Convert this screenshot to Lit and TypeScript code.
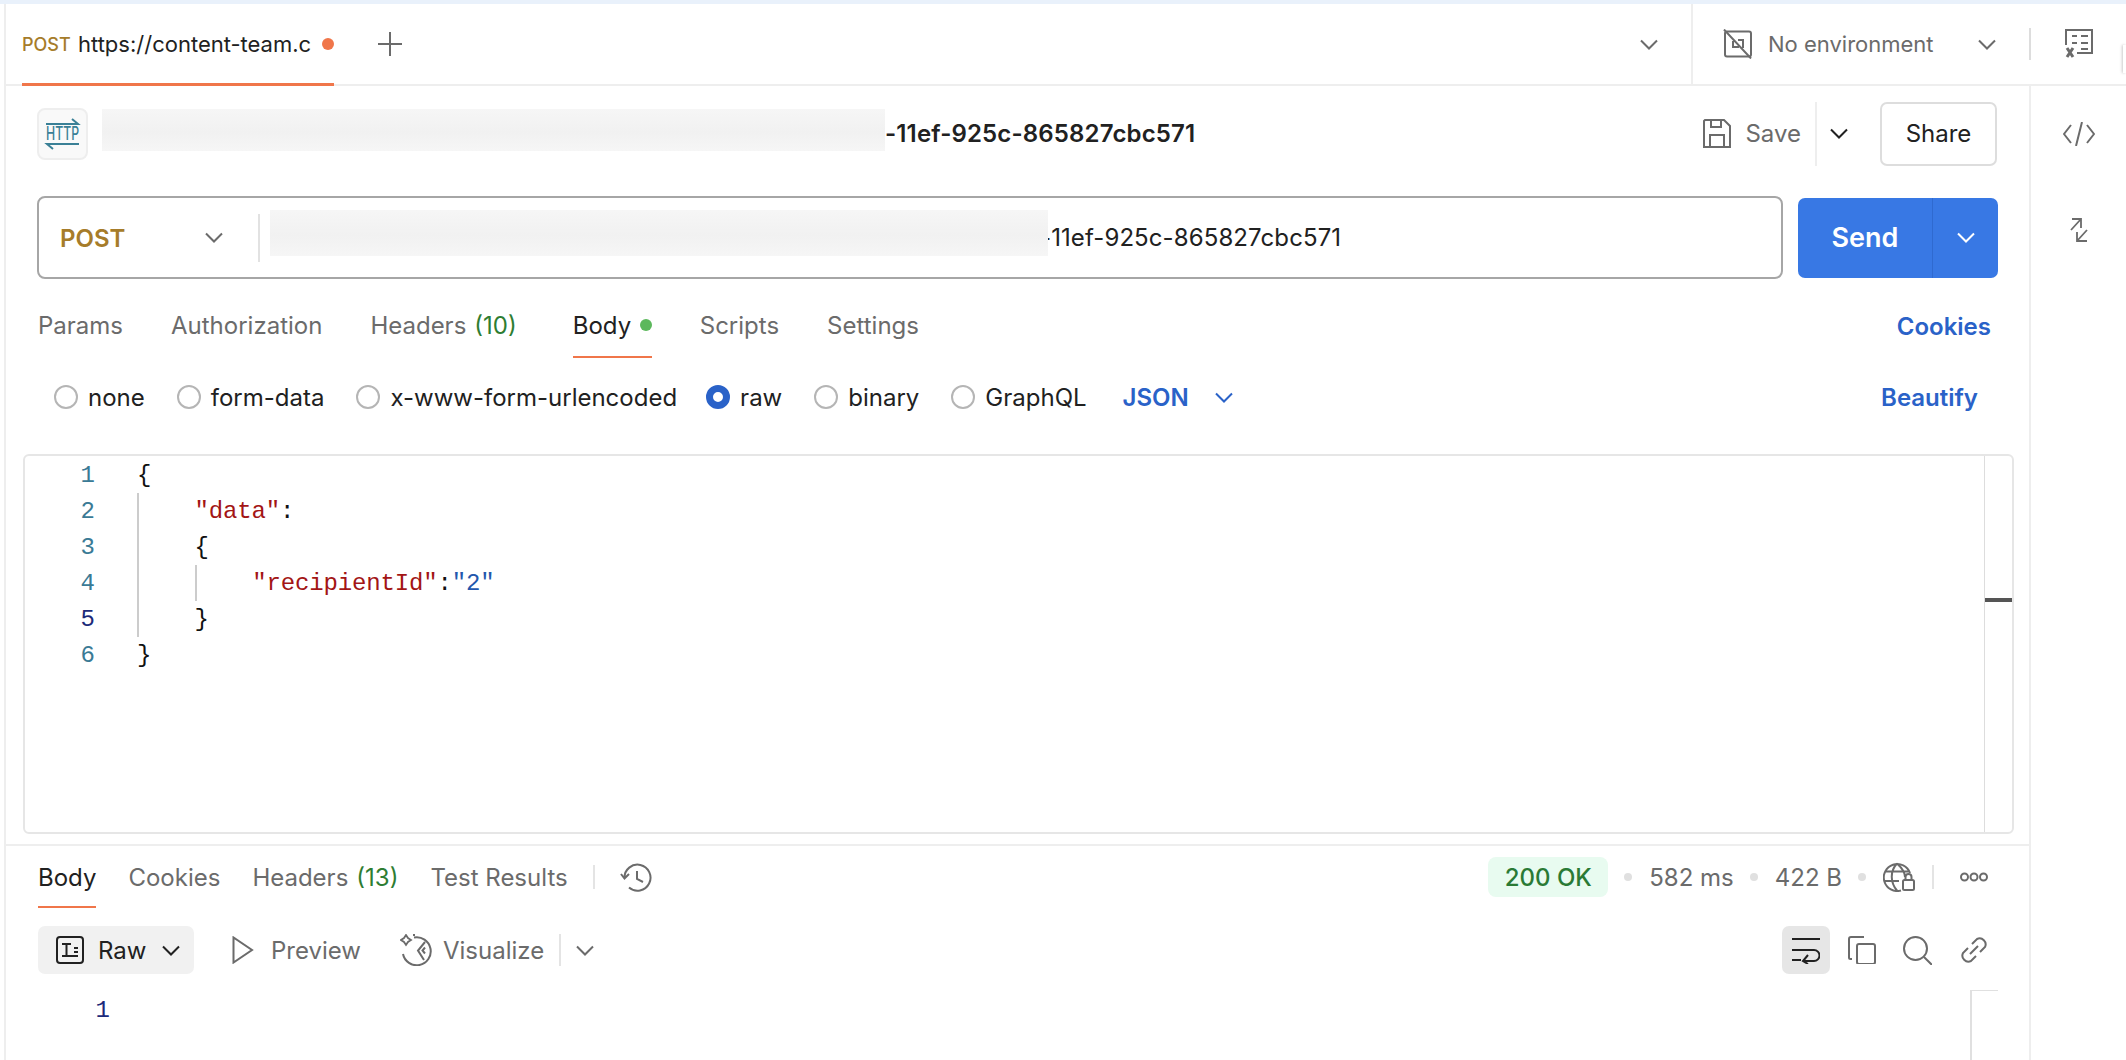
import { LitElement, html, css, svg } from "lit";
import { customElement } from "lit/decorators.js";

const ico = (w: number, h: number, body: unknown, cls = "") => html`<svg class="ico ${cls}" width=${w} height=${h} viewBox="0 0 ${w} ${h}" fill="none" stroke="currentColor" stroke-width="2" aria-hidden="true">${body}</svg>`;
const chev = (cls = "") => ico(18, 11, svg`<path d="M1 1.5 9 9.5 17 1.5"/>`, cls);

const codeLines: { indent: number; parts: [string, string][]; active?: boolean }[] = [
  { indent: 0, parts: [["p", "{"]] },
  { indent: 1, parts: [["k", '"data"'], ["p", ":"]] },
  { indent: 1, parts: [["p", "{"]] },
  { indent: 2, parts: [["k", '"recipientId"'], ["p", ":"], ["s", '"2"']] },
  { indent: 1, parts: [["p", "}"]], active: true },
  { indent: 0, parts: [["p", "}"]] },
];

@customElement("app-root")
export class AppRoot extends LitElement {
  static styles = css`
    :host { display: block; width: 2126px; height: 1060px; overflow: hidden; background: #fff; font-family: Inter, "Liberation Sans", sans-serif; font-size: 24px; color: #6b6b6b; position: relative; }
    * { box-sizing: border-box; }
    .ico { display: block; flex: none; }
    .strip { height: 4px; background: #e9f1fb; }
    .shell { margin-left: 4px; border-left: 2px solid #eee; height: 1056px; display: flex; flex-direction: column; }
    .tabbar { height: 82px; flex: none; display: flex; align-items: stretch; border-bottom: 2px solid #eee; position: relative; }
    .tab { margin-left: 16px; width: 312px; display: flex; align-items: center; border-bottom: 3px solid #f0764a; height: 82px; padding-top: 1px; }
    .tab .m { font-size: 18px; font-weight: 500; color: #a67c2a; width: 56px; }
    .tab .u { color: #212121; width: 244px; white-space: nowrap; overflow: hidden; font-size: 22px; }
    .tab .dot { width: 12px; height: 12px; border-radius: 50%; background: #f0764a; flex: none; }
    .plus { margin-left: 44px; align-self: center; color: #6b6b6b; }
    .grow { flex: 1; }
    .tabchev { align-self: center; margin-right: 33px; color: #6b6b6b; }
    .env { width: 435px; flex: none; border-left: 2px solid #eee; display: flex; align-items: center; padding-left: 30px; color: #6b6b6b; font-size: 22px; }
    .env .t { margin-left: 15px; width: 210px; white-space: nowrap; }
    .vsep { width: 2px; height: 32px; background: #ddd; margin-left: 33px; flex: none; }
    .env .vars { margin-left: 34px; }
    .peek { position: absolute; right: 0; top: 41px; width: 3px; height: 28px; background: #fff; box-shadow: -1px 0 3px rgba(0,0,0,.22); }
    .main { flex: 1; display: flex; min-height: 0; }
    .col { width: 2023px; flex: none; display: flex; flex-direction: column; }
    .side { flex: 1; border-left: 2px solid #eee; display: flex; flex-direction: column; align-items: center; color: #6b6b6b; }
    .side .a { margin-top: 36px; }
    .side .b { margin-top: 72px; }
    .title { height: 95px; flex: none; display: flex; align-items: center; padding: 0 32px 0 31px; }
    .hicon { width: 51px; height: 52px; border: 2px solid #eee; border-radius: 8px; background: #f9f9f9; flex: none; color: #3a8096; }
    .hicon svg { display: block; overflow: visible; }
    .hicon text { font: 500 18px Inter, sans-serif; fill: #3a8096; stroke: none; }
    .blur { background: linear-gradient(180deg, #f6f6f6, #f1f1f1 55%, #f6f6f6); flex: none; }
    .blurA { width: 783px; height: 42px; margin: 0 0 8px 14px; }
    .ttail { font-weight: 600; color: #212121; white-space: nowrap; letter-spacing: .15px; }
    .save { display: flex; align-items: center; color: #6b6b6b; }
    .save span { margin-left: 14px; }
    .savesep { width: 2px; height: 64px; background: #eee; margin-left: 14px; }
    .savechev { margin: 0 32px 0 13px; color: #212121; }
    .share { width: 117px; height: 64px; border: 2px solid #ddd; border-radius: 7px; display: flex; align-items: center; justify-content: center; color: #212121; }
    .url { margin-top: 15px; height: 83px; flex: none; display: flex; padding: 0 31px; gap: 15px; align-items: center; }
    .ubox { width: 1746px; height: 83px; border: 2px solid #a6a6a6; border-radius: 8px; display: flex; align-items: center; padding-left: 21px; }
    .ubox .m { width: 145px; font-size: 24px; font-weight: 600; color: #a67c2a; padding-top: 2px; }
    .ubox .c { color: #6b6b6b; }
    .usep { width: 2px; height: 48px; background: #e2e2e2; margin-left: 35px; }
    .blurB { width: 778px; height: 46px; margin: 0 0 10px 10px; position: relative; z-index: 1; }
    .utail { color: #212121; white-space: nowrap; margin-left: -8px; letter-spacing: .1px; }
    .send { width: 200px; height: 80px; background: #3878e4; border-radius: 7px; display: flex; color: #fff; }
    .send .l { width: 135px; display: flex; align-items: center; justify-content: center; font-size: 27px; font-weight: 600; border-right: 1px solid #2f6ad0; }
    .send .r { flex: 1; display: flex; align-items: center; justify-content: center; }
    .rtabs { margin-top: 17px; height: 62px; flex: none; display: flex; padding: 0 31px 0 32px; gap: 48px; }
    .rtab { display: flex; align-items: center; height: 62px; border-bottom: 2px solid transparent; white-space: nowrap; }
    .rtabs .rtab, .rtabs .link { padding-bottom: 2px; }
    .rtab.on { color: #212121; border-bottom-color: #f0764a; }
    .rtab.bodytab { margin-left: 8px; width: 79px; gap: 9px; }
    .rtab.bodytab i { width: 12px; height: 12px; border-radius: 50%; background: #5cb85c; display: block; flex: none; }
    .count { color: #2e7d32; margin-left: 8px; }
    .link { color: #2a62c8; font-weight: 600; margin-left: auto; display: flex; align-items: center; padding-right: 7px; }
    .radios { height: 78px; flex: none; display: flex; align-items: center; padding: 0 44px 0 48px; color: #212121; }
    .radio { width: 24px; height: 24px; border-radius: 50%; border: 2px solid #b5b5b5; margin-right: 10px; flex: none; }
    .radio.on { border: 7px solid #2a62c8; }
    .rlabel { margin-right: 32px; white-space: nowrap; }
    .rlabel.long { margin-right: 29px; }
    .json { color: #2a62c8; font-weight: 600; margin-left: 4px; }
    .jsonchev { margin-left: 26px; color: #2a62c8; }
    .editor { margin: 18px 0 0 17px; width: 1991px; height: 380px; flex: none; border: 2px solid #e6e6e6; border-radius: 6px; display: flex; font: 24px/36px "Liberation Mono", monospace; position: relative; }
    .gutter { width: 70px; padding-top: 2px; text-align: right; flex: none; color: #3a7a95; }
    .gutter .act { color: #1c2a7a; }
    .code { width: 1890px; flex: none; padding: 2px 0 0 42px; border-right: 1px solid #ddd; color: #000; letter-spacing: -.15px; }
    .cl { height: 36px; display: flex; white-space: pre; }
    .guide { width: 57.6px; height: 36px; border-left: 2px solid #ccc; flex: none; margin-top: -1px; }
    .k { color: #a31515; } .s { color: #2357ad; } .p { color: #111; }
    .marker { flex: 1; position: relative; }
    .marker i { position: absolute; left: 0; right: 0; top: 142px; height: 4px; background: #555; }
    .rdiv { margin-top: 10px; border-top: 2px solid #eee; flex: none; }
    .restabs { height: 64px; flex: none; display: flex; padding: 0 41px 0 32px; gap: 32px; align-items: flex-start; }
    .restabs .rtab { padding-top: 2px; }
    .rsep { width: 2px; height: 24px; background: #e4e4e4; margin: 19px 0 0 -7px; flex: none; }
    .hist { margin: 17px 0 0 -7px; color: #6b6b6b; }
    .status { margin-left: auto; height: 62px; display: flex; align-items: center; }
    .pill { width: 120px; height: 40px; background: #e8fbf0; color: #2a7a35; border-radius: 8px; display: flex; align-items: center; justify-content: center; font-weight: 500; }
    .sdot { width: 8px; height: 8px; border-radius: 50%; background: #e0e0e0; margin: 0 17px 0 16px; flex: none; }
    .stat { white-space: nowrap; }
    .ssep { width: 2px; height: 24px; background: #e4e4e4; margin: 0 26px 0 17px; }
    .tools { margin-top: 16px; height: 48px; flex: none; display: flex; align-items: center; padding: 0 41px 0 32px; }
    .rawbtn { width: 156px; height: 48px; background: #f1f1f1; border-radius: 7px; display: flex; align-items: center; padding-left: 18px; color: #212121; flex: none; }
    .rawbtn span { margin: 0 16px 0 14px; }
    .pv { margin-left: 38px; } .pvt { margin-left: 17px; }
    .vz { margin-left: 39px; } .vzt { margin-left: 11px; }
    .tsep { width: 2px; height: 32px; background: #e4e4e4; margin: 0 15px 0 15px; }
    .wrapb { width: 48px; height: 48px; background: #e6e6e6; border-radius: 7px; margin-left: auto; display: flex; align-items: center; justify-content: center; color: #212121; }
    .ti { margin-left: 18px; } .ti2 { margin-left: 27px; } .ti3 { margin-left: 28px; }
    .resbody { flex: 1; display: flex; font: 24px/36px "Liberation Mono", monospace; color: #1c2a7a; margin-top: 16px; min-height: 0; }
    .resnum { width: 104px; text-align: right; flex: none; padding-top: 3px; }
    .resmini { margin-left: 1860px; width: 28px; border-left: 2px solid #e0e0e0; border-top: 1px solid #e0e0e0; flex: none; }
  `;

  render() {
    return html`
      <div class="strip"></div>
      <div class="shell">
        <div class="tabbar">
          <div class="tab"><span class="m">POST</span><span class="u">https://content-team.c</span><span class="dot"></span></div>
          ${ico(24, 24, svg`<path d="M12 0v24M0 12h24"/>`, "plus")}
          <div class="grow"></div>
          ${chev("tabchev")}
          <div class="env">
            ${ico(30, 30, svg`<rect x="2" y="2.500" width="26" height="25" rx="2"/><path d="M1 0.500 28 29.500M10 12v6h6M15 11h5v8" stroke-width="2"/>`)}
            <span class="t">No environment</span>
            ${chev()}
            <span class="vsep"></span>
            ${ico(28, 30, svg`<path d="M1 16V1H27V24H12M7 7h5M16 7h7M7 14h5M16 14h7M16 20h7"/><path d="M2 19l6 9M8 19l-6 9" stroke-width="3"/>`, "vars")}
          </div>
          <span class="peek"></span>
        </div>
        <div class="main">
          <div class="col">
            <div class="title">
              <div class="hicon">
                <svg width="47" height="48" viewBox="0 0 47 48" fill="none" stroke="currentColor" stroke-width="2">
                  <path d="M7 14H39L33 9"/>
                  <path d="M40 34H8L14 39"/>
                  <text x="7" y="30" textLength="33" lengthAdjust="spacingAndGlyphs">HTTP</text>
                </svg>
              </div>
              <div class="blur blurA"></div>
              <span class="ttail">-11ef-925c-865827cbc571</span>
              <div class="grow"></div>
              <div class="save">
                ${ico(28, 29, svg`<path d="M2 1H21L27 7V28H1V2ZM8 1V8H18V1M7 28V16H21V28"/>`)}
                <span>Save</span>
              </div>
              <div class="savesep"></div>
              ${chev("savechev")}
              <div class="share">Share</div>
            </div>
            <div class="url">
              <div class="ubox">
                <span class="m">POST</span>
                ${chev("c")}
                <span class="usep"></span>
                <div class="blur blurB"></div>
                <span class="utail">-11ef-925c-865827cbc571</span>
              </div>
              <div class="send"><span class="l">Send</span><span class="r">${chev()}</span></div>
            </div>
            <div class="rtabs">
              <div class="rtab">Params</div>
              <div class="rtab">Authorization</div>
              <div class="rtab">Headers<span class="count">(10)</span></div>
              <div class="rtab on bodytab">Body<i></i></div>
              <div class="rtab">Scripts</div>
              <div class="rtab">Settings</div>
              <div class="link">Cookies</div>
            </div>
            <div class="radios">
              <span class="radio"></span><span class="rlabel">none</span>
              <span class="radio"></span><span class="rlabel">form-data</span>
              <span class="radio"></span><span class="rlabel long">x-www-form-urlencoded</span>
              <span class="radio on"></span><span class="rlabel">raw</span>
              <span class="radio"></span><span class="rlabel">binary</span>
              <span class="radio"></span><span class="rlabel">GraphQL</span>
              <span class="json">JSON</span>
              ${chev("jsonchev")}
              <span class="link">Beautify</span>
            </div>
            <div class="editor">
              <div class="gutter">${codeLines.map((l, i) => html`<div class=${l.active ? "act" : ""}>${i + 1}</div>`)}</div>
              <div class="code">
                ${codeLines.map((l) => html`<div class="cl">${Array.from({ length: l.indent }, () => html`<span class="guide"></span>`)}${l.parts.map(([c, t]) => html`<span class=${c}>${t}</span>`)}</div>`)}
              </div>
              <div class="marker"><i></i></div>
            </div>
            <div class="rdiv"></div>
            <div class="restabs">
              <div class="rtab on">Body</div>
              <div class="rtab">Cookies</div>
              <div class="rtab">Headers<span class="count">(13)</span></div>
              <div class="rtab">Test Results</div>
              <span class="rsep"></span>
              ${ico(32, 30, svg`<path d="M4.500 15A13 13 0 1 1 9 24.500M1 11l3.500 4.500L9 11M17 8v8l6 3"/>`, "hist")}
              <div class="status">
                <span class="pill">200 OK</span>
                <span class="sdot"></span><span class="stat">582 ms</span>
                <span class="sdot"></span><span class="stat">422 B</span>
                <span class="sdot"></span>
                ${ico(32, 30, svg`<path d="M18 28.500A13.500 13.500 0 1 1 27 11M14 1.500C7 9 7 20 14 28.500M14 1.500C20 7 22 12 22 15M2 9.500H26M1 19H16"/><rect x="20" y="18" width="11" height="10" rx="1.500"/><path d="M22.500 18v-3a3 3 0 0 1 6 0v3"/>`)}
                <span class="ssep"></span>
                ${ico(28, 10, svg`<circle cx="4.500" cy="5" r="3.500"/><circle cx="14" cy="5" r="3.500"/><circle cx="23.500" cy="5" r="3.500"/>`)}
              </div>
            </div>
            <div class="tools">
              <div class="rawbtn">
                ${ico(28, 28, svg`<rect x="1" y="1" width="26" height="26" rx="3"/><path d="M6 8H15M10.500 8V19M6 20H22M18 12H22M18 16H22"/>`)}
                <span>Raw</span>
                ${chev()}
              </div>
              ${ico(22, 28, svg`<path d="M1.500 1.500V26.500L20 14Z"/>`, "pv")}
              <span class="pvt">Preview</span>
              ${ico(32, 32, svg`<path d="M14 3.500A14 14 0 1 1 3 20M25 8 18 16.500 24 26M25 13.500l-2.500 3 2.500 3"/><path d="M6 1l2 3 3 2-3 2-2 3-2-3-3-2 3-2zM13 1h2" stroke-width="1.800"/>`, "vz")}
              <span class="vzt">Visualize</span>
              <span class="tsep"></span>
              ${chev()}
              <div class="wrapb">${ico(28, 28, svg`<path d="M0 3H28M0 14H22a5 5 0 0 1 0 11H11M16 19l-5 6 5 3M0 24H9"/>`)}</div>
              ${ico(28, 28, svg`<path d="M4 23H2.500A1.500 1.500 0 0 1 1 21.500V3a2 2 0 0 1 2-2H16"/><rect x="9" y="8" width="18" height="20" rx="2"/>`, "ti")}
              ${ico(29, 29, svg`<circle cx="12.500" cy="12.500" r="11.500"/><path d="M21 21l8 8"/>`, "ti2")}
              ${ico(28, 28, svg`<path d="M12 8l5-5a6 6 0 0 1 8 8l-5 5M16 20l-5 5a6 6 0 0 1-8-8l5-5M10 18l8-8"/>`, "ti3")}
            </div>
            <div class="resbody"><div class="resnum">1</div><div class="resmini"></div></div>
          </div>
          <div class="side">
            ${ico(32, 24, svg`<path d="M8 3 1 12 8 21M24 3 31 12 24 21M19 0 13 24"/>`, "a")}
            ${ico(18, 24, svg`<path d="M2 1H11V10M11 1 1 12" stroke-width="1.800"/><path d="M7 14V23H17M7 23 17 12" stroke-width="1.800"/>`, "b")}
          </div>
        </div>
      </div>
    `;
  }
}
